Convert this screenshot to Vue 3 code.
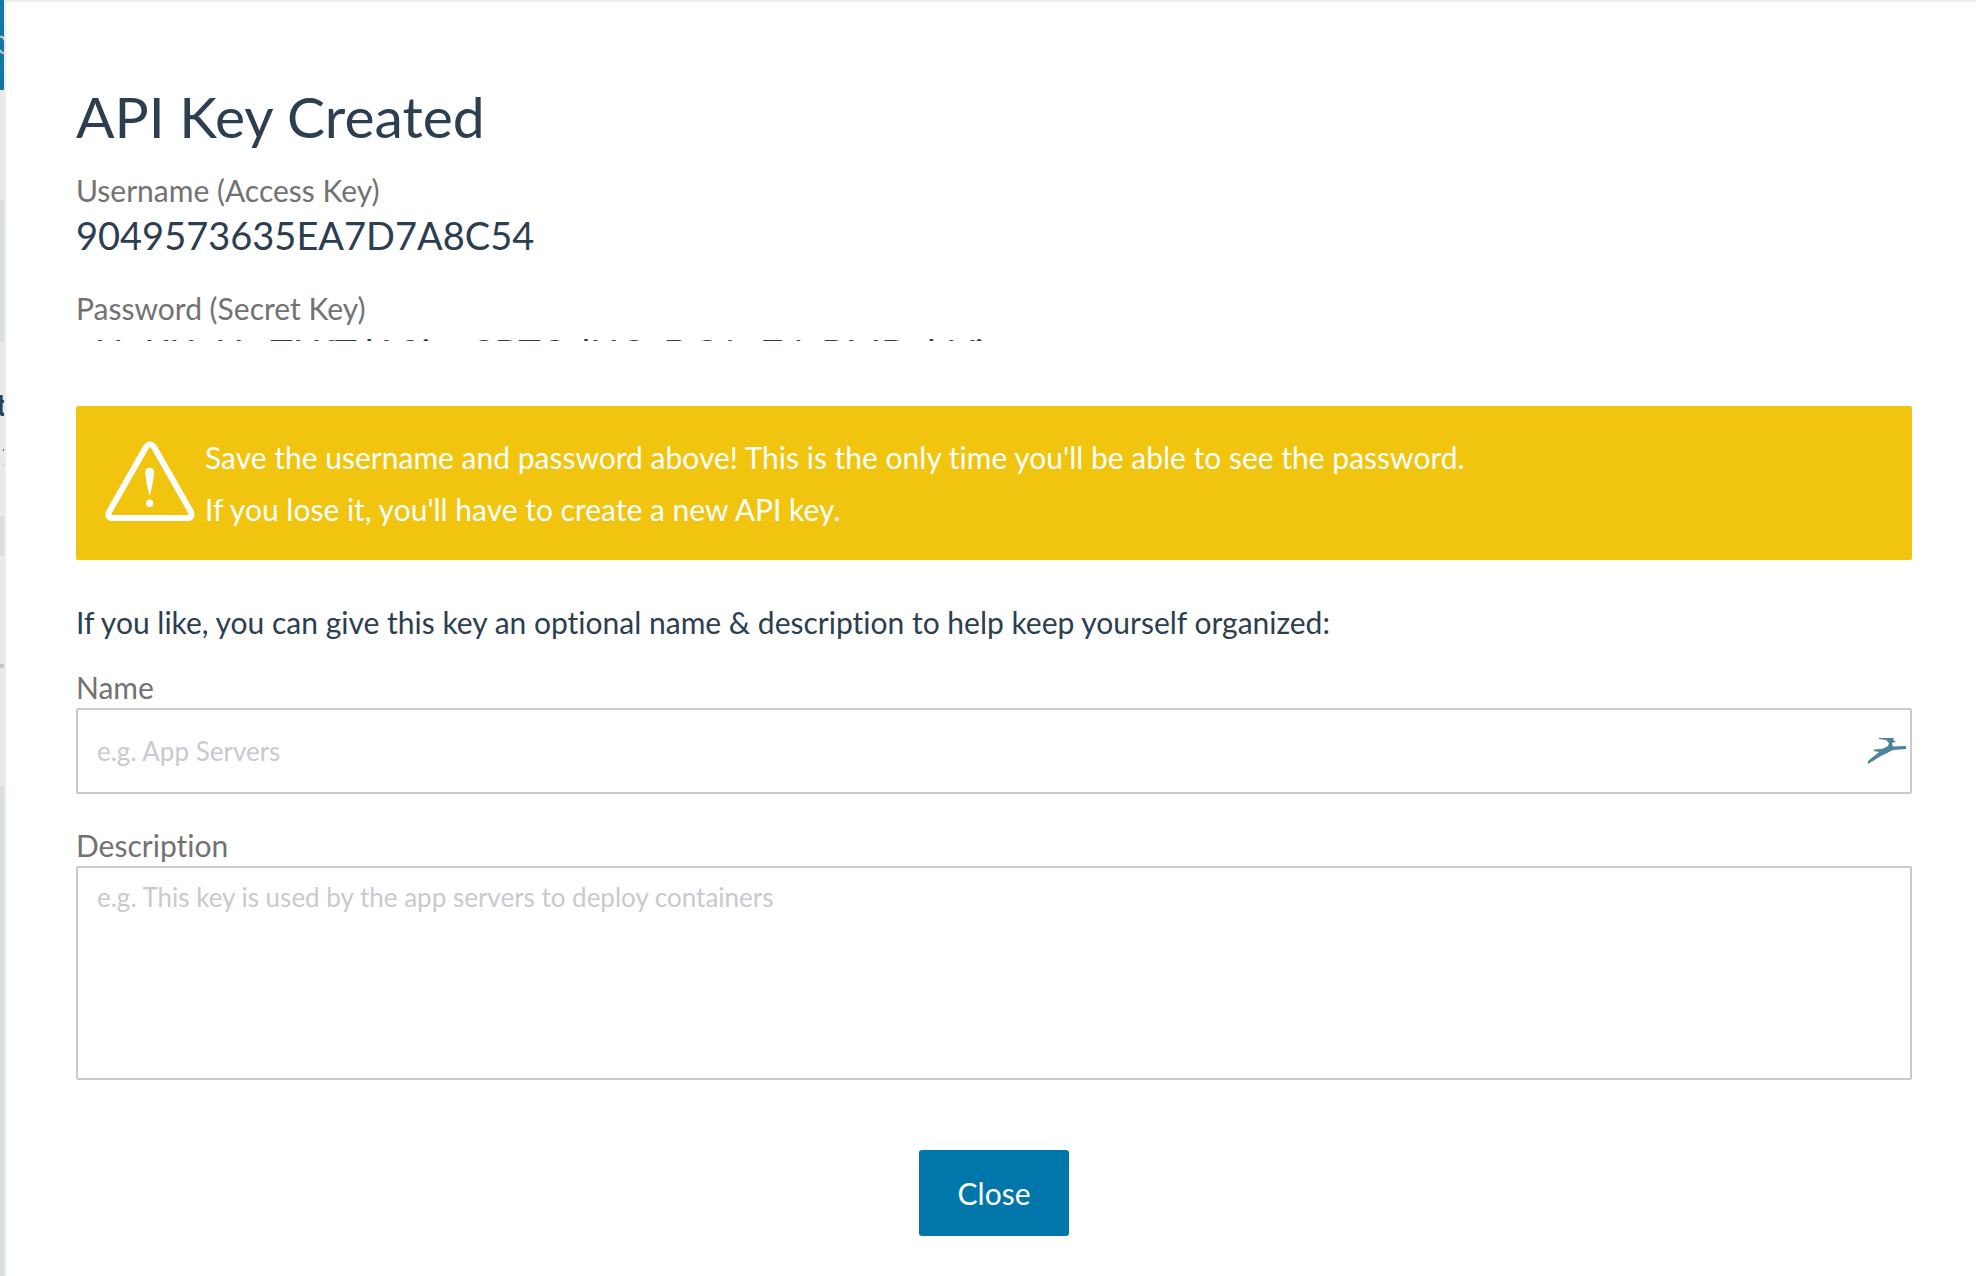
<script setup>
import { ref } from 'vue'

const name = ref('')
const description = ref('')
</script>

<template>
  <div class="page">
    <div class="backdrop" aria-hidden="true">
      <div class="header">
        <svg width="4" height="20" viewBox="0 0 4 20"><path d="M0 2Q3 1 5 6M0 15Q2 19 5 18" fill="none" stroke="#c3c7c9" stroke-width="2" /></svg>
      </div>
      <div class="gap-top"></div>
      <div class="band toolbar"></div>
      <div class="heading">
        <span>t</span>
        <i class="dot link"></i>
        <i class="dot"></i>
      </div>
      <div class="band row"></div>
      <div class="panel"></div>
      <div class="band rest"></div>
    </div>
    <main class="modal">
      <h1>API Key Created</h1>
      <dl>
        <dt>Username (Access Key)</dt>
        <dd>9049573635EA7D7A8C54</dd>
        <dt>Password (Secret Key)</dt>
        <dd class="secret">aHoKKnHwTHfTdA8ieaCBTCslHCxDC1o74sBMBolrVi</dd>
      </dl>
      <div class="warning" role="alert">
        <svg width="90" height="80" viewBox="0 0 90 80" aria-hidden="true">
          <path d="M41 6Q45 1 49 6L86 71Q88 77 82 77H8Q2 77 4 71Z" fill="none" stroke="#fff" stroke-width="6" />
          <path d="M40.300 30.500C40.300 25.500 49 25.500 49 30.500C49 37 46.500 48 45 54H44.300C42.800 48 40.300 37 40.300 30.500Z" fill="#fff" />
          <circle cx="44.600" cy="62.300" r="3.700" fill="#fff" />
        </svg>
        <p>Save the username and password above! This is the only time you'll be able to see the password.<br>If you lose it, you'll have to create a new API key.</p>
      </div>
      <form @submit.prevent>
        <p class="hint">If you like, you can give this key an optional name &amp; description to help keep yourself organized:</p>
        <label for="key-name">Name</label>
        <div class="field">
          <input id="key-name" v-model="name" type="text" placeholder="e.g. App Servers">
          <svg class="autofill" width="38" height="26" viewBox="0 0 38 26" aria-hidden="true">
            <path d="M11 0H26L25 2L28 3.500L24 5L25 8.500L38 8V11L25 12L19 15L13 18L0 26V23L11 14L6 13V11.500L14 11L20 8L21 5L18 2L11 1Z" fill="#4d8499" />
          </svg>
        </div>
        <label for="key-description">Description</label>
        <textarea id="key-description" v-model="description" placeholder="e.g. This key is used by the app servers to deploy containers"></textarea>
        <button type="button">Close</button>
      </form>
    </main>
  </div>
</template>

<style>
body { margin: 0; background: #fff; }
</style>

<style scoped>
.page {
  display: flex;
  min-height: 100vh;
  font-family: Lato, sans-serif;
  font-variant-ligatures: none;
  color: #2c3e50;
  background: #fff;
}

/* Sliver of the page behind the modal */
.backdrop {
  flex: none;
  width: 4px;
  display: flex;
  flex-direction: column;
  overflow: hidden;
  background: #e9e9e9;
}
.header { height: 90px; background: #1278a2; }
.header svg { display: block; margin-top: 35px; }
.gap-top { height: 110px; }
.band { background: #dadedf; }
.toolbar { height: 142px; }
.heading { height: 174px; }
.heading span {
  display: block;
  margin-top: 44px;
  text-indent: -4px;
  font-size: 30px;
  line-height: 36px;
  font-weight: 700;
}
.dot { display: block; width: 1px; height: 2px; margin: 13px 0 0 3px; background: #c3c5c8; }
.link { margin-top: 27px; background: #1278a2; }
.row { height: 40px; }
.panel {
  height: 230px;
  background: linear-gradient(#c3c5c8, #c3c5c8) 0 108px / 100% 4px no-repeat;
}
.rest { flex: 1; }

.modal {
  flex: 1;
  min-width: 0;
  border-top: 2px solid #ececec;
  border-left: 2px solid #ececec;
  padding: 78px 64px 40px 70px;
}
h1 { margin: 0; font-size: 57px; line-height: 72px; font-weight: 400; }
dl { margin: 18px 0 65px; }
dt { font-size: 30px; line-height: 40px; color: #727272; }
dd { margin: 0 0 28px; font-size: 38px; line-height: 50px; }
.secret { height: 13px; margin: 0; overflow: hidden; }
.warning {
  display: flex;
  gap: 10px;
  padding: 25px 29px;
  border-radius: 2px;
  background: #f1c40f;
  color: #fff;
  font-size: 30px;
  line-height: 52px;
}
.warning p { margin: 0; }
.warning svg { flex: none; margin-top: 10px; }
.hint { margin: 42px 0 24px; font-size: 30px; line-height: 40px; }
label { display: block; font-size: 30px; line-height: 42px; color: #727272; }
.field { position: relative; margin-bottom: 30px; }
.autofill { position: absolute; top: 30px; right: 6px; }
input,
textarea {
  box-sizing: border-box;
  display: block;
  width: 100%;
  border: 2px solid #c9c9d0;
  border-radius: 2px;
  padding: 11px 19px;
  background: #fff;
  color: #2c3e50;
  font: 26px/36px Lato, sans-serif;
}
input { height: 86px; }
textarea { height: 214px; resize: none; }
input::placeholder,
textarea::placeholder { color: #c9c9d0; opacity: 1; }
button {
  display: block;
  width: 150px;
  height: 86px;
  margin: 70px auto 0;
  border: 0;
  border-radius: 3px;
  background: #0076aa;
  color: #fff;
  font: 30px Lato, sans-serif;
}
</style>
